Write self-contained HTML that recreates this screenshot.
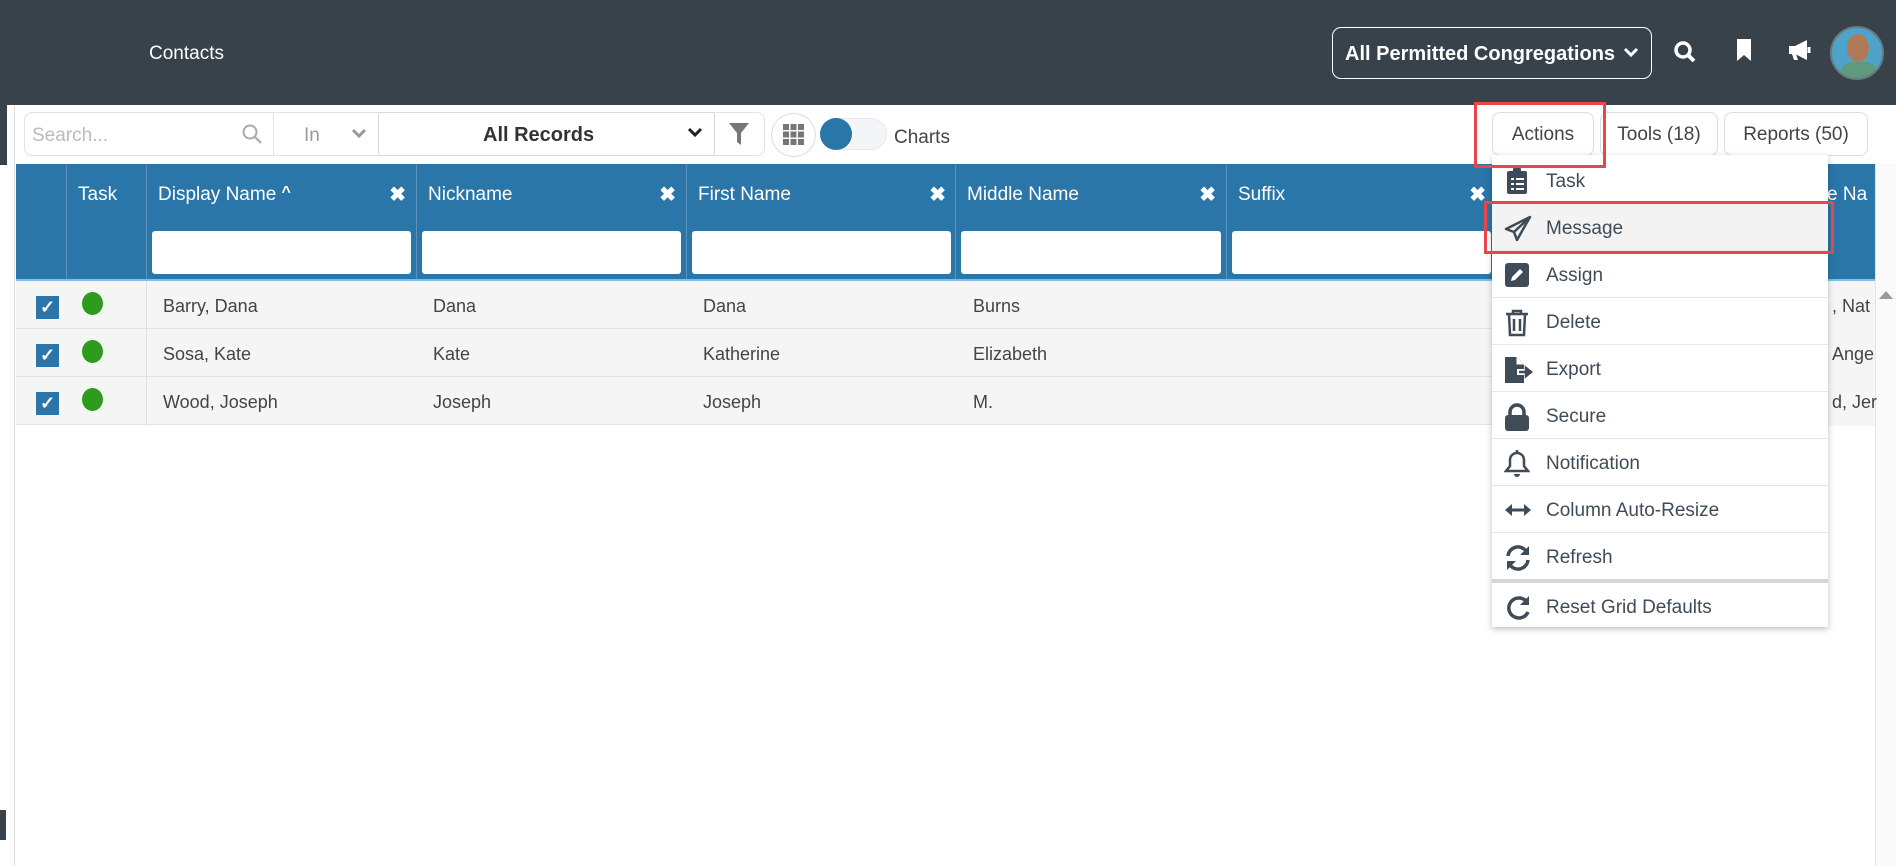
<!DOCTYPE html>
<html><head><meta charset="utf-8"><style>
*{box-sizing:border-box;margin:0;padding:0}
body{width:1896px;height:866px;overflow:hidden;background:#fff;font-family:"Liberation Sans",sans-serif;position:relative;color:#444}
.abs{position:absolute}
#hdr{left:0;top:0;width:1896px;height:105px;background:#37424a}
.col{position:absolute;top:164px;height:115px;background:#2a76a8;border-left:1px solid #5b93bb}
.col .t{position:absolute;left:11px;top:20px;color:#fff;font-size:19px}
.col .x{position:absolute;right:10px;top:18px;color:#fff;font-size:20px;font-weight:bold}
.col .in{position:absolute;left:5px;right:5px;top:67px;height:43px;background:#fff;border-radius:3px}
.row{position:absolute;left:16px;width:1480px;height:48px;background:#f5f5f5;border-bottom:1px solid #e4e4e4}
.cell{position:absolute;top:15px;font-size:18px;color:#444}
.cb{position:absolute;left:20px;top:15px;width:23px;height:23px;background:#2a76a8;color:#fff;font-size:18px;text-align:center;line-height:23px;font-weight:bold}
.dot{position:absolute;left:66px;top:11px;width:21px;height:23px;border-radius:50%;background:#2e9a1e}
.btn{position:absolute;top:112px;height:44px;border:1px solid #ddd;border-radius:8px;font-size:19px;color:#444;text-align:center;line-height:44px;background:#fff}
.mi{position:absolute;left:1492px;width:336px;height:47px;border-bottom:1px solid #e6e6e6;font-size:19px;color:#3f4c57}
.mi span{position:absolute;left:54px;top:14px}
.mi svg{position:absolute;left:12px;top:11px}
</style></head><body>
<div id="hdr" class="abs"></div>
<div class="abs" style="left:149px;top:43px;color:#fff;font-size:19px">Contacts</div>
<div class="abs" style="left:1332px;top:27px;width:320px;height:52px;border:1px solid #fff;border-radius:9px;color:#fff;font-size:20px;font-weight:bold;line-height:52px;padding-left:12px">All Permitted Congregations<svg class="abs" style="left:290px;top:19px" width="16" height="12" viewBox="0 0 16 12"><path d="M2 2l6 6 6-6" stroke="#fff" stroke-width="3" fill="none"/></svg></div>
<svg class="abs" style="left:1673px;top:40px" width="24" height="24" viewBox="0 0 24 24"><circle cx="10" cy="10" r="7" stroke="#fff" stroke-width="3.5" fill="none"/><path d="M15 15l6 6" stroke="#fff" stroke-width="4"/></svg>
<svg class="abs" style="left:1735px;top:38px" width="18" height="24" viewBox="0 0 18 24"><path d="M2 1h14v22l-7-6-7 6z" fill="#fff"/></svg>
<svg class="abs" style="left:1787px;top:39px" width="26" height="22" viewBox="0 0 26 22"><path d="M2 7h6l12-6v20l-12-6H2z M5 15h4l2 6H7z" fill="#fff"/><path d="M22 8v6" stroke="#fff" stroke-width="3"/></svg>
<div class="abs" style="left:1830px;top:26px;width:54px;height:54px;border-radius:50%;background:#4fa3c8;border:2px solid #6a7a80;overflow:hidden"><div class="abs" style="left:15px;top:6px;width:22px;height:28px;border-radius:50%;background:#b07a58"></div><div class="abs" style="left:8px;top:34px;width:38px;height:24px;border-radius:12px 12px 0 0;background:#5f9a7e"></div></div>
<div class="abs" style="left:0;top:105px;width:7px;height:60px;background:#37424a"></div>
<div class="abs" style="left:0;top:810px;width:6px;height:30px;background:#37424a"></div>
<div class="abs" style="left:14px;top:105px;width:1px;height:761px;background:#ddd"></div>
<div class="abs" style="left:24px;top:112px;width:741px;height:44px;border:1px solid #e2e2e2;border-radius:8px"></div>
<div class="abs" style="left:32px;top:125px;font-size:19px;color:#bbb">Search...</div>
<svg class="abs" style="left:241px;top:123px" width="22" height="22" viewBox="0 0 22 22"><circle cx="9" cy="9" r="6.5" stroke="#aaa" stroke-width="2" fill="none"/><path d="M14 14l6 6" stroke="#aaa" stroke-width="2.2"/></svg>
<div class="abs" style="left:273px;top:112px;width:1px;height:44px;background:#e2e2e2"></div>
<div class="abs" style="left:304px;top:125px;font-size:19px;color:#999">In</div>
<svg class="abs" style="left:351px;top:128px" width="16" height="12" viewBox="0 0 16 12"><path d="M2 2l6 6 6-6" stroke="#999" stroke-width="3" fill="none"/></svg>
<div class="abs" style="left:378px;top:112px;width:337px;height:44px;border:1px solid #d8d8d8;border-radius:3px"></div>
<div class="abs" style="left:483px;top:124px;font-size:20px;font-weight:bold;color:#333">All Records</div>
<svg class="abs" style="left:687px;top:127px" width="16" height="12" viewBox="0 0 16 12"><path d="M2 2l6 6 6-6" stroke="#222" stroke-width="3" fill="none"/></svg>
<svg class="abs" style="left:728px;top:122px" width="22" height="24" viewBox="0 0 22 24"><path d="M1 1h20l-8 10v12l-4-3v-9z" fill="#777"/></svg>
<div class="abs" style="left:771px;top:113px;width:45px;height:44px;border:1px solid #ddd;border-radius:50%"></div>
<svg class="abs" style="left:783px;top:124px" width="21" height="21" viewBox="0 0 21 21" fill="#777"><rect x="0" y="0" width="6" height="6"/><rect x="7.5" y="0" width="6" height="6"/><rect x="15" y="0" width="6" height="6"/><rect x="0" y="7.5" width="6" height="6"/><rect x="7.5" y="7.5" width="6" height="6"/><rect x="15" y="7.5" width="6" height="6"/><rect x="0" y="15" width="6" height="6"/><rect x="7.5" y="15" width="6" height="6"/><rect x="15" y="15" width="6" height="6"/></svg>
<div class="abs" style="left:820px;top:118px;width:67px;height:32px;border-radius:16px;background:#f4f5f8;border:1px solid #e8e8ee"></div>
<div class="abs" style="left:820px;top:118px;width:32px;height:32px;border-radius:50%;background:#2a76a8"></div>
<div class="abs" style="left:894px;top:127px;font-size:19px;color:#444">Charts</div>
<div class="btn" style="left:1492px;width:102px">Actions</div>
<div class="btn" style="left:1600px;width:118px">Tools (18)</div>
<div class="btn" style="left:1724px;width:144px">Reports (50)</div>
<div class="col" style="left:16px;width:50px;border-left:none"></div>
<div class="col" style="left:66px;width:81px"><div class="t">Task</div></div>
<div class="col" style="left:146px;width:270px"><div class="t">Display Name <b style="font-size:16px;vertical-align:top">^</b></div><div class="x">✖</div><div class="in"></div></div>
<div class="col" style="left:416px;width:270px"><div class="t">Nickname</div><div class="x">✖</div><div class="in"></div></div>
<div class="col" style="left:686px;width:270px"><div class="t">First Name</div><div class="x">✖</div><div class="in"></div></div>
<div class="col" style="left:955px;width:271px"><div class="t">Middle Name</div><div class="x">✖</div><div class="in"></div></div>
<div class="col" style="left:1226px;width:270px"><div class="t">Suffix</div><div class="x">✖</div><div class="in"></div></div>
<div class="col" style="left:1496px;width:379px"><div class="t" style="left:330px">e Na</div></div>
<div class="abs" style="left:16px;top:279px;width:1859px;height:2px;background:#7dc0e6"></div>
<div class="abs" style="left:1875px;top:164px;width:21px;height:702px;background:#fafafa;border-left:1px solid #e5e5e5"></div>
<svg class="abs" style="left:1878px;top:290px" width="16" height="10" viewBox="0 0 16 10"><path d="M1 9l7-8 7 8z" fill="#999"/></svg>
<div class="row" style="top:281px"><div class="cb">✓</div><div class="dot"></div><div class="cell" style="left:147px">Barry, Dana</div><div class="cell" style="left:417px">Dana</div><div class="cell" style="left:687px">Dana</div><div class="cell" style="left:957px">Burns</div></div>
<div class="row" style="top:329px"><div class="cb">✓</div><div class="dot"></div><div class="cell" style="left:147px">Sosa, Kate</div><div class="cell" style="left:417px">Kate</div><div class="cell" style="left:687px">Katherine</div><div class="cell" style="left:957px">Elizabeth</div></div>
<div class="row" style="top:377px"><div class="cb">✓</div><div class="dot"></div><div class="cell" style="left:147px">Wood, Joseph</div><div class="cell" style="left:417px">Joseph</div><div class="cell" style="left:687px">Joseph</div><div class="cell" style="left:957px">M.</div></div>
<div class="abs" style="left:146px;top:281px;width:1px;height:145px;background:#e0e0e0"></div>
<div class="abs" style="left:1828px;top:281px;width:47px;height:145px;background:#f5f5f5"></div>
<div class="abs" style="left:1832px;top:296px;font-size:18px">, Nat</div>
<div class="abs" style="left:1832px;top:344px;font-size:18px">Ange</div>
<div class="abs" style="left:1832px;top:392px;font-size:18px">d, Jer</div>
<div class="abs" style="left:1492px;top:155px;width:336px;height:472px;background:#fff;box-shadow:0 2px 6px rgba(0,0,0,.25)"></div>
<div class="mi" style="top:157px"><svg width="26" height="26" viewBox="0 0 26 26"><rect x="3" y="3" width="20" height="23" rx="2" fill="#3f4c57"/><rect x="9" y="0" width="8" height="5" rx="1" fill="#3f4c57"/><g fill="#fff"><rect x="7" y="10" width="3" height="2"/><rect x="12" y="10" width="8" height="2"/><rect x="7" y="15" width="3" height="2"/><rect x="12" y="15" width="8" height="2"/><rect x="7" y="20" width="3" height="2"/><rect x="12" y="20" width="8" height="2"/></g></svg><span>Task</span></div>
<div class="mi" style="top:204px;background:#f3f3f3"><svg width="28" height="26" viewBox="0 0 28 26"><path d="M26 2L2 14l8 3 3 8 13-23zM10 17l16-15" stroke="#3f4c57" stroke-width="2.5" fill="none" stroke-linejoin="round"/></svg><span>Message</span></div>
<div class="mi" style="top:251px"><svg width="26" height="26" viewBox="0 0 26 26"><rect x="1" y="1" width="24" height="24" rx="3" fill="#3f4c57"/><path d="M7 19l1-4 8-8 3 3-8 8z" fill="#fff"/></svg><span>Assign</span></div>
<div class="mi" style="top:298px"><svg width="26" height="28" viewBox="0 0 26 28"><path d="M2 5h22M9 5V2h8v3M5 5l1 21h14l1-21" stroke="#3f4c57" stroke-width="2.5" fill="none"/><path d="M10 10v12M16 10v12" stroke="#3f4c57" stroke-width="2.5"/></svg><span>Delete</span></div>
<div class="mi" style="top:345px"><svg width="30" height="28" viewBox="0 0 30 28"><path d="M1 1h12l7 7v19H1z" fill="#3f4c57"/><path d="M13 1v7h7" fill="#fff" stroke="#fff"/><rect x="13" y="13" width="8" height="6" fill="#fff"/><path d="M15 16h10M22 12l5 4-5 4z" stroke="#3f4c57" stroke-width="2.5" fill="#3f4c57"/></svg><span>Export</span></div>
<div class="mi" style="top:392px"><svg width="26" height="28" viewBox="0 0 26 28"><path d="M6 13V9a7 7 0 0 1 14 0v4" stroke="#3f4c57" stroke-width="3.5" fill="none"/><rect x="1" y="12" width="24" height="16" rx="3" fill="#3f4c57"/></svg><span>Secure</span></div>
<div class="mi" style="top:439px"><svg width="26" height="28" viewBox="0 0 26 28"><path d="M13 3a7 7 0 0 0-7 7v6l-4 5h22l-4-5v-6a7 7 0 0 0-7-7z" stroke="#3f4c57" stroke-width="2.5" fill="none"/><path d="M10 24a3 3 0 0 0 6 0" fill="#3f4c57"/><path d="M13 0v3" stroke="#3f4c57" stroke-width="2.5"/></svg><span>Notification</span></div>
<div class="mi" style="top:486px"><svg width="28" height="26" viewBox="0 0 28 26"><path d="M5 13h18" stroke="#3f4c57" stroke-width="3"/><path d="M1 13l7-6v12zM27 13l-7-6v12z" fill="#3f4c57"/></svg><span>Column Auto-Resize</span></div>
<div class="mi" style="top:533px;border-bottom:4px solid #d4d6d8;height:50px"><svg width="28" height="28" viewBox="0 0 28 28"><path d="M4 12a10 10 0 0 1 18-5M24 16a10 10 0 0 1-18 5" stroke="#3f4c57" stroke-width="3.5" fill="none"/><path d="M25 2v9h-9zM3 26v-9h9z" fill="#3f4c57"/></svg><span>Refresh</span></div>
<div class="mi" style="top:583px;border-bottom:none"><svg width="28" height="28" viewBox="0 0 28 28"><path d="M22 7a10 10 0 1 0 2 11" stroke="#3f4c57" stroke-width="3.5" fill="none"/><path d="M25 2v9h-9z" fill="#3f4c57"/></svg><span>Reset Grid Defaults</span></div>
<div class="abs" style="left:1474px;top:102px;width:132px;height:66px;border:3px solid #e8464a"></div>
<div class="abs" style="left:1484px;top:201px;width:350px;height:53px;border:3px solid #e8464a"></div>
</body></html>
